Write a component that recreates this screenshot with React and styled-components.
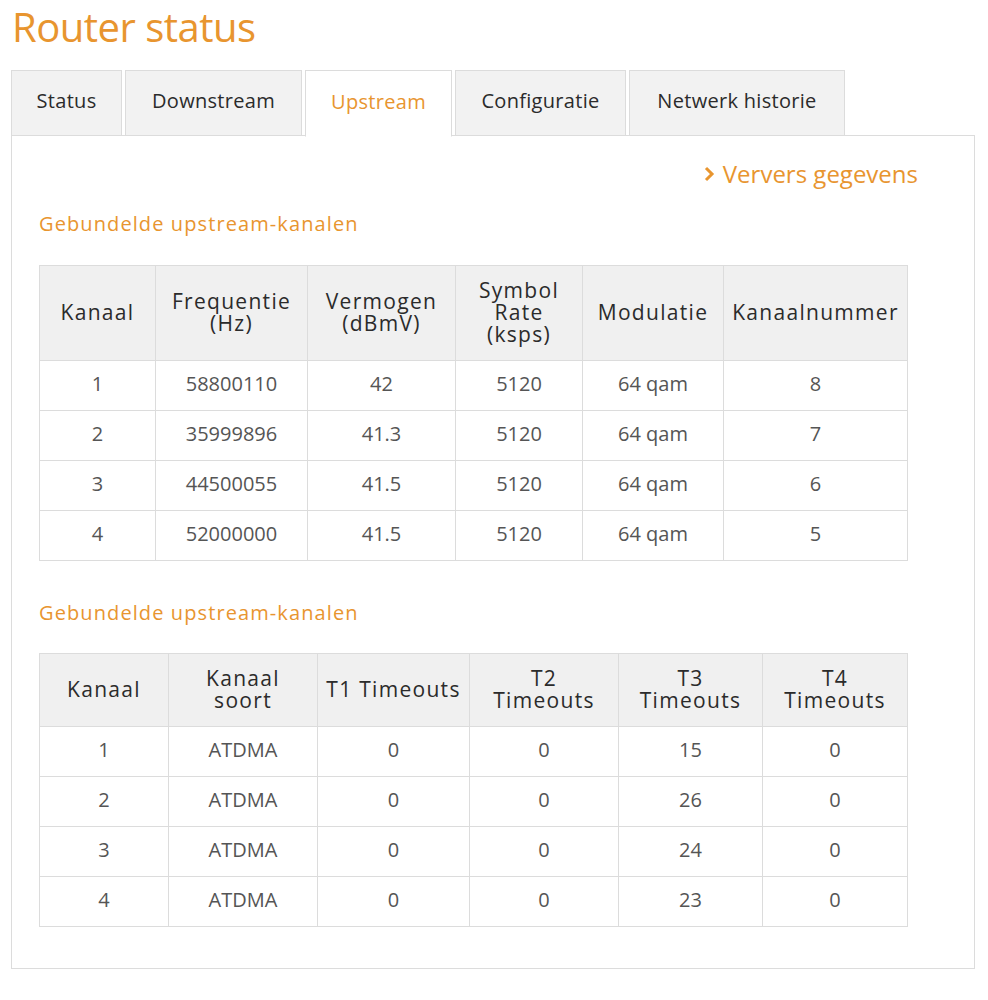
import React from 'react'
import styled, { createGlobalStyle } from 'styled-components'

const GlobalStyle = createGlobalStyle`
  body {
    margin: 0;
    background: #ffffff;
    font-family: "Open Sans", "Noto Sans", "Liberation Sans", sans-serif;
  }
`

const orange = '#e8952f'

const Page = styled.div`
  width: 988px;
  padding: 0 13px 0 11px;
  box-sizing: border-box;
`

const Title = styled.h1`
  margin: 0;
  padding: 0 0 16px 1px;
  font-size: 40px;
  font-weight: 400;
  letter-spacing: -0.5px;
  line-height: 54px;
  color: ${orange};
`

const Tabs = styled.div`
  display: flex;
  gap: 3px;
  height: 66px;
  position: relative;
  z-index: 1;
`

const Tab = styled.div`
  display: flex;
  align-items: center;
  justify-content: center;
  width: ${p => p.$w}px;
  box-sizing: border-box;
  padding-bottom: 5px;
  border: 1px solid #dcdcdc;
  border-bottom: ${p => (p.$active ? '1px solid #ffffff' : '1px solid #dcdcdc')};
  background: ${p => (p.$active ? '#ffffff' : '#f2f2f2')};
  color: ${p => (p.$active ? orange : '#2b2b2b')};
  font-size: 20px;
  letter-spacing: 0.3px;
  height: ${p => (p.$active ? '67px' : '66px')};
`

const Panel = styled.div`
  border: 1px solid #dcdcdc;
  margin-top: -1px;
  height: 834px;
  box-sizing: border-box;
  padding: 22px 0 0 27px;
`

const RefreshRow = styled.div`
  display: flex;
  justify-content: flex-end;
  padding-right: 56px;
`

const Refresh = styled.a`
  display: flex;
  align-items: center;
  gap: 8px;
  color: ${orange};
  font-size: 24px;
  line-height: 32px;
  text-decoration: none;
`

const SectionTitle = styled.h2`
  margin: ${p => p.$top}px 0 0 0;
  font-size: 20px;
  font-weight: 500;
  letter-spacing: 1.1px;
  line-height: 26px;
  color: ${orange};
`

const Table = styled.table`
  margin-top: ${p => p.$top}px;
  width: 868px;
  table-layout: fixed;
  border-collapse: collapse;
  border: 1px solid #dcdcdc;
`

const Th = styled.th`
  background: #f0f0f0;
  border: 1px solid #dcdcdc;
  font-size: 21px;
  font-weight: 400;
  letter-spacing: 1.3px;
  line-height: 22px;
  color: #2b2b2b;
  height: ${p => p.$h}px;
  padding: 0 2px 3px;
  box-sizing: border-box;
  white-space: pre-line;
`

const Td = styled.td`
  border: 1px solid #dcdcdc;
  height: 45px;
  padding: 0 0 4px;
  text-align: center;
  font-size: 20px;
  color: #555555;
`

const Chevron = () => (
  <svg width="11" height="16" viewBox="0 0 11 16">
    <path d="M2 2 L8 8 L2 14" fill="none" stroke={orange} strokeWidth="3" />
  </svg>
)

const tabs = [
  ['Status', 111],
  ['Downstream', 177],
  ['Upstream', 147],
  ['Configuratie', 171],
  ['Netwerk historie', 216]
]

const table1 = {
  cols: [116, 152, 148, 127, 141, 184],
  head: ['Kanaal', 'Frequentie\n(Hz)', 'Vermogen\n(dBmV)', 'Symbol\nRate\n(ksps)', 'Modulatie', 'Kanaalnummer'],
  rows: [
    ['1', '58800110', '42', '5120', '64 qam', '8'],
    ['2', '35999896', '41.3', '5120', '64 qam', '7'],
    ['3', '44500055', '41.5', '5120', '64 qam', '6'],
    ['4', '52000000', '41.5', '5120', '64 qam', '5']
  ]
}

const table2 = {
  cols: [129, 149, 152, 149, 144, 145],
  head: ['Kanaal', 'Kanaal\nsoort', 'T1 Timeouts', 'T2\nTimeouts', 'T3\nTimeouts', 'T4\nTimeouts'],
  rows: [
    ['1', 'ATDMA', '0', '0', '15', '0'],
    ['2', 'ATDMA', '0', '0', '26', '0'],
    ['3', 'ATDMA', '0', '0', '24', '0'],
    ['4', 'ATDMA', '0', '0', '23', '0']
  ]
}

const DataTable = ({ data, headHeight, top }) => (
  <Table $top={top}>
    <colgroup>
      {data.cols.map((w, i) => (
        <col key={i} style={{ width: w }} />
      ))}
    </colgroup>
    <thead>
      <tr>
        {data.head.map(h => (
          <Th key={h} $h={headHeight}>{h}</Th>
        ))}
      </tr>
    </thead>
    <tbody>
      {data.rows.map((r, i) => (
        <tr key={i}>
          {r.map((c, j) => (
            <Td key={j}>{c}</Td>
          ))}
        </tr>
      ))}
    </tbody>
  </Table>
)

const App = () => (
  <Page>
    <GlobalStyle />
    <Title>Router status</Title>
    <Tabs>
      {tabs.map(([t, w]) => (
        <Tab key={t} $w={w} $active={t === 'Upstream'}>{t}</Tab>
      ))}
    </Tabs>
    <Panel>
      <RefreshRow>
        <Refresh href="#">
          <Chevron />
          Ververs gegevens
        </Refresh>
      </RefreshRow>
      <SectionTitle $top={21}>Gebundelde upstream-kanalen</SectionTitle>
      <DataTable data={table1} headHeight={95} top={28} />
      <SectionTitle $top={39}>Gebundelde upstream-kanalen</SectionTitle>
      <DataTable data={table2} headHeight={73} top={27} />
    </Panel>
  </Page>
)

export default App
